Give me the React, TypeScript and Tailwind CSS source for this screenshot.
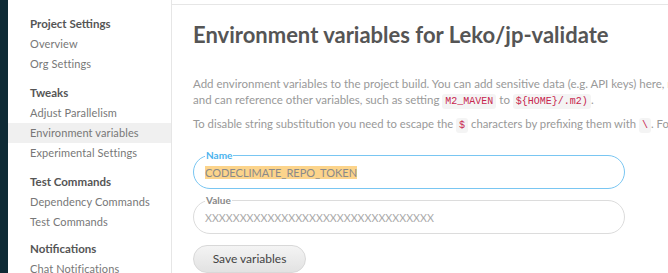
import React from "react";

const font = { fontFamily: "Lato, 'Open Sans', sans-serif" };

function Section({ title, items, active, last }: { title: string; items: string[]; active?: string; last?: boolean }) {
  return (
    <div className={last ? "" : "mb-[9px]"}>
      <div className="pl-[22px] h-[20px] flex items-center text-[11.5px] font-bold text-[#555]">{title}</div>
      {items.map((it) => (
        <div
          key={it}
          className={`pl-[22px] h-[20px] flex items-center text-[11px] tracking-[0.1px] text-[#777] ${it === active ? "bg-[#f0f0f0]" : ""}`}
        >
          {it}
        </div>
      ))}
    </div>
  );
}

function Code({ children }: { children: React.ReactNode }) {
  return (
    <code
      className="bg-[#f4f4f4] text-[#c7254e] rounded-[3px] px-[3px] py-[2px] text-[10px]"
      style={{ fontFamily: "'Liberation Mono', monospace" }}
    >
      {children}
    </code>
  );
}

export default function App() {
  return (
    <div className="flex w-[668px] h-[273px] overflow-hidden bg-white" style={font}>
      <div className="w-[8px] bg-[#0e2a35] shrink-0" />
      <div className="w-[164px] shrink-0 border-r border-[#e6e6e6] pt-[14px]">
        <Section title="Project Settings" items={["Overview", "Org Settings"]} />
        <Section
          title="Tweaks"
          items={["Adjust Parallelism", "Environment variables", "Experimental Settings"]}
          active="Environment variables"
        />
        <div className="mb-[7px]">
          <Section title="Test Commands" items={["Dependency Commands", "Test Commands"]} last />
        </div>
        <Section title="Notifications" items={["Chat Notifications"]} last />
      </div>
      <div className="flex-1 min-w-0">
        <div className="h-[5px] border-b border-[#e6e6e6]" />
        <div className="pl-[21px] pt-[16px] whitespace-nowrap">
          <h1 className="text-[22px] font-bold text-[#555] leading-[28px]">Environment variables for Leko/jp-validate</h1>
          <p className="mt-[27px] text-[11.5px] text-[#999] leading-[16px]">
            Add environment variables to the project build. You can add sensitive data (e.g. API keys) here, rather than placing them in the repository. The values can be any bash expression
            <br />
            and can reference other variables, such as setting <Code>M2_MAVEN</Code> to <Code>{"${HOME}/.m2)"}</Code>.
          </p>
          <p className="mt-[6px] text-[11.3px] text-[#999] leading-[16px]">
            To disable string substitution you need to escape the <Code>$</Code> characters by prefixing them with <Code>\</Code>. For example, a crontab entry
          </p>
          <div className="relative mt-[21px] w-[432px] h-[34px] border border-[#79c6f2] rounded-[17px] pl-[11px] flex items-center">
            <span className="absolute left-[11px] top-[-7px] bg-white px-[1px] text-[10px] font-bold text-[#4ab3ee] leading-[12px]">
              Name
            </span>
            <div className="mt-[1px] text-[11px] text-[#8a8a8a] leading-[13px]">
              <span className="bg-[#fcd48b]">CODECLIMATE_REPO_TOKEN</span>
            </div>
          </div>
          <div className="relative mt-[11px] w-[432px] h-[34px] border border-[#dcdcdc] rounded-[17px] pl-[11px] flex items-center">
            <span className="absolute left-[11px] top-[-7px] bg-white px-[1px] text-[10px] font-bold text-[#888] leading-[12px]">
              Value
            </span>
            <div className="mt-[1px] text-[10.7px] text-[#aaa] leading-[13px]">XXXXXXXXXXXXXXXXXXXXXXXXXXXXXXXXX</div>
          </div>
          <button className="mt-[11px] w-[113px] h-[28px] rounded-full border border-[#d8d8d8] bg-gradient-to-b from-[#f4f4f4] to-[#e2e2e2] text-[12px] text-[#444]">
            Save variables
          </button>
        </div>
      </div>
    </div>
  );
}
